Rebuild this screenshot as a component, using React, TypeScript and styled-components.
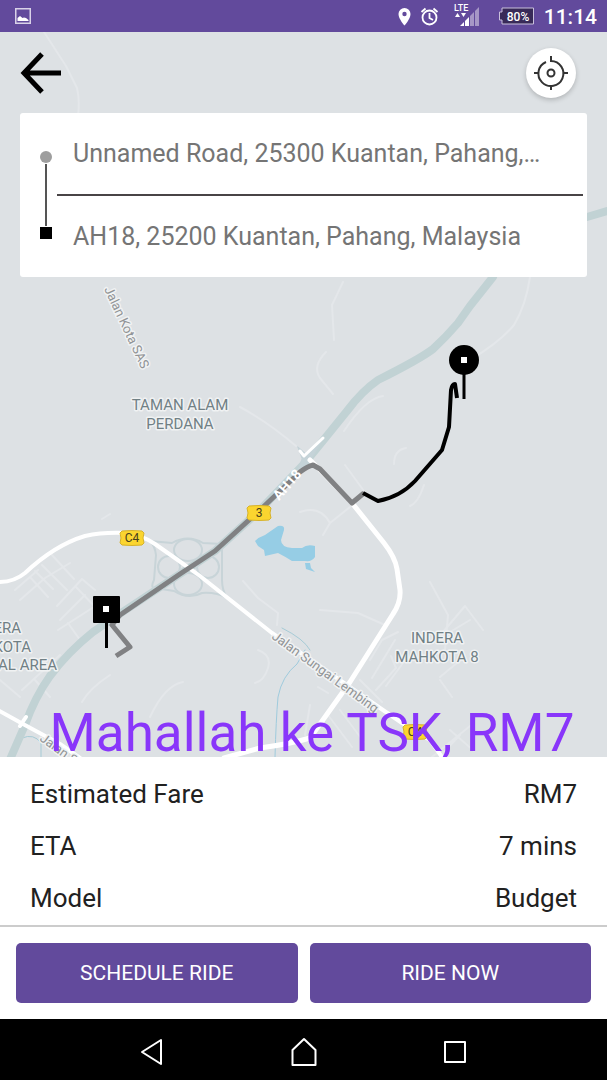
import React from "react";
import styled, { createGlobalStyle } from "styled-components";

const GlobalStyle = createGlobalStyle`
  *, *::before, *::after { box-sizing: border-box; }
  body { margin: 0; background: #000; font-family: Roboto, "Noto Sans", sans-serif; }
  button { font: inherit; border: 0; padding: 0; cursor: pointer; }
  svg { display: block; }
`;

const purple = "#624a9c";

const Screen = styled.div`
  display: flex;
  flex-direction: column;
  min-height: 100vh;
  background: #fff;
`;

const StatusBar = styled.header`
  display: flex;
  align-items: center;
  justify-content: space-between;
  height: 32px;
  padding: 0 10px 0 15px;
  background: ${purple};
  color: #fff;
`;

const StatusGroup = styled.div`
  display: flex;
  align-items: center;
`;

const Clock = styled.time`
  margin-left: 10px;
  padding-top: 2px;
  font-size: 21px;
  font-weight: 500;
  line-height: 30px;
`;

const MapArea = styled.main`
  position: relative;
  flex: 1 0 auto;
  display: flex;
  flex-direction: column;
  min-height: 560px;
  overflow: hidden;
  background: #dde1e4;
`;

const MapCanvas = styled.svg`
  position: absolute;
  inset: 0;
  width: 100%;
  height: 100%;
`;

const TopBar = styled.div`
  position: relative;
  display: flex;
  align-items: center;
  justify-content: space-between;
  height: 81px;
  padding: 0 31px 0 20px;
`;

const BackButton = styled.button`
  background: none;
`;

const LocateButton = styled.button`
  display: grid;
  place-items: center;
  width: 50px;
  height: 50px;
  border-radius: 50%;
  background: #fff;
  box-shadow: 0 2px 5px rgba(0, 0, 0, 0.2);
`;

const RouteCard = styled.section`
  position: relative;
  display: flex;
  gap: 5px;
  margin: 0 20px;
  padding: 0 4px 0 20px;
  border-radius: 3px;
  background: #fff;
`;

const Rail = styled.div`
  display: flex;
  flex-direction: column;
  align-items: center;
  gap: 1px;
  width: 12px;
  padding: 38px 0;
`;

const OriginDot = styled.span`
  width: 12px;
  height: 12px;
  border-radius: 50%;
  background: #9e9e9e;
`;

const RailLine = styled.span`
  flex: 1;
  width: 2px;
  background: #555;
`;

const DestinationDot = styled.span`
  width: 12px;
  height: 12px;
  background: #000;
`;

const Stops = styled.div`
  flex: 1;
  min-width: 0;
`;

const Stop = styled.p`
  margin: 0;
  padding: 0 16px;
  overflow: hidden;
  color: #757575;
  font-size: 25px;
  line-height: 81px;
  text-overflow: ellipsis;
  white-space: nowrap;

  & + & {
    border-top: 2px solid #484446;
  }
`;

const Caption = styled.p`
  position: relative;
  margin: auto 0 0;
  padding-left: 17px;
  color: #8936fa;
  font-size: 53px;
  line-height: 48px;
  text-align: center;
  white-space: nowrap;
`;

const Details = styled.dl`
  margin: 0;
  padding: 11px 30px 1px;
  color: #212121;
  font-size: 26px;
  line-height: 52px;
`;

const DetailRow = styled.div`
  display: flex;
  justify-content: space-between;

  dd { margin: 0; }
`;

const Actions = styled.div`
  display: grid;
  grid-template-columns: 1fr 1fr;
  gap: 12px;
  padding: 16px;
  border-top: 2px solid #ccc;
`;

const ActionButton = styled.button`
  height: 60px;
  border-radius: 5px;
  background: ${purple};
  color: #fff;
  font-size: 21px;
`;

const NavBar = styled.nav`
  display: grid;
  grid-template-columns: repeat(3, 25%);
  justify-content: center;
  height: 61px;
  background: #000;
`;

const NavButton = styled.button`
  display: grid;
  place-items: center;
  padding-top: 4px;
  background: none;
`;

const details = [
  { label: "Estimated Fare", value: "RM7" },
  { label: "ETA", value: "7 mins" },
  { label: "Model", value: "Budget" },
];

function RoadBadge({ x, y, label }: { x: number; y: number; label: string }) {
  return (
    <g transform={`translate(${x} ${y})`}>
      <path d="M-10-7Q0-8 10-7L12-5 11 0 12 5 10 7Q0 8-10 7L-12 5-11 0-12-5Z" fill="#fbd52f" stroke="#d6b22c" />
      <text y="4" fontSize="12" textAnchor="middle" fill="#47401c">{label}</text>
    </g>
  );
}

function RouteMap() {
  return (
    <MapCanvas viewBox="0 32 607 725" preserveAspectRatio="xMidYMax slice" role="img" aria-label="Route map">
      <g fill="none" strokeLinecap="round" strokeLinejoin="round">
        <g stroke="#e4e7ea" strokeWidth="2">
          <path d="M44 32L66 66 77 88Q80 100 78 116" />
          <path d="M530 277Q526 305 514 325Q500 342 470 360" />
          <path d="M343 282L332 305 334 340M326 352Q312 366 320 378L333 394M383 396Q366 398 344 431M345 465L364 491M406 448Q394 450 394 464M424 485Q418 503 410 506" />
          <path d="M240 407Q268 422 296 446" />
          <path d="M350 507L330 523 323 535M300 512Q320 505 330 523M102 519L110 514M243 581L258 598 278 613 277 625M82 702Q90 688 110 675M150 717Q165 685 183 682M258 650Q272 655 268 668T255 683" />
          <path d="M15 590L38 570M35 571L53 589M30 577L48 597M42 565L67 590M52 555L74 579M20 600L45 578 70 563M57 606L82 579 95 590M60 620L85 595M68 623L80 640M58 630L100 603M76 587L98 610M0 680L20 697M22 690L60 655M35 680L50 697" />
          <path d="M430 582L448 615 445 650M443 632L465 606 483 630M470 620L440 638M320 610L358 613 385 625M370 660L382 640 398 632M372 678L395 640M376 690L396 668 391 656M386 686L403 663M440 677L463 658M440 680L452 697M360 680L382 702M310 705L305 735M318 687L328 693M328 715L352 747M340 710L364 742M432 757L470 726M440 756L460 735M450 730L474 751" />
        </g>
        <path d="M275 757Q276 720 278 697Q282 676 297 664L305 650" stroke="#9fcbdd" />
        <path d="M22 738Q34 733 41 743V757M282 628Q304 639 310 650" stroke="#a6cbd6" />
        <path d="M493 277L470 306 458 323Q446 337 433 349Q420 359 378 380Q362 391 347 411L326 437 304 464 259 511 215 551 180 574 115 617 93 632Q68 652 50 676Q35 697 25 725L8 764M587 217L607 211" stroke="#c1d2d4" strokeWidth="8" />
        <g stroke="#c8d4d8" strokeWidth="2">
          <ellipse cx="188" cy="550" rx="14" ry="11" />
          <ellipse cx="188" cy="584" rx="14" ry="11" />
          <ellipse cx="169" cy="567" rx="11" ry="11" />
          <ellipse cx="208" cy="567" rx="11" ry="11" />
          <path d="M150 541L172 543Q188 534 203 543L222 544V580Q222 590 227 598Q216 592 202 593Q188 600 174 591L155 588Q150 588 154 580L156 555Q155 546 150 541Z" />
        </g>
        <path d="M298 447L306 454 324 437 310 461 296 476 302 459Z" fill="#c5d3d8" stroke="#c5d3d8" />
        <g stroke="#fff" strokeWidth="4">
          <path d="M-5 582Q13 583 25 573Q55 545 85 536Q103 532 125 533Q142 535 155 544Q178 560 200 576L272 633 380 708 402 723 430 740 444 760" />
          <path d="M310 460L324 474 352 503 384 543Q395 557 397 569L400 590Q401 602 393 614L350 682 340 696 310 738Q290 744 260 748L224 758" strokeWidth="5" />
          <path d="M-4 709L23 724 60 744 80 758M20 726L26 717" />
          <path d="M300 451L304 456 323 438" strokeWidth="3" />
        </g>
      </g>

      <path d="M255 541Q259 537 265 535L278 526Q285 525 284 530L281 540Q281 547 292 548L302 548Q307 544 315 546V557Q312 562 305 561L292 561Q284 556 278 553L265 556 264 550 258 546ZM305 563L310 563 311 568 315 572 306 569Z" fill="#96cde5" />

      <g fill="none" strokeLinejoin="round">
        <path d="M116 656L130 647 112 625 120 615 180 574 215 551 259 511 300 472Q308 466 313 465L320 469 352 503 364 493" stroke="#808183" strokeWidth="5" />
        <path d="M363 493L378 501Q400 497 415 481L442 450 449 427 451 390Q452 384 455 384L457 398" stroke="#000" strokeWidth="4" />
      </g>

      <g stroke="#f0f2f3" strokeWidth="3" paintOrder="stroke" strokeLinejoin="round">
        <g fill="#708085" fontSize="15" textAnchor="middle">
          <text x="180" y="410">TAMAN ALAM</text>
          <text x="180" y="429">PERDANA</text>
          <text x="437" y="643">INDERA</text>
          <text x="437" y="662">MAHKOTA 8</text>
          <g textAnchor="end">
            <text x="21" y="633">INDERA</text>
            <text x="31" y="652">MAHKOTA</text>
            <text x="57" y="670">INDUSTRIAL AREA</text>
          </g>
        </g>
        <g fill="#919496" fontSize="13">
          <text transform="translate(104 289) rotate(65)">Jalan Kota SAS</text>
          <text transform="translate(271 638) rotate(36)">Jalan Sungai Lembing</text>
          <text transform="translate(39 740) rotate(36)">Jalan Sungai Lembing</text>
        </g>
      </g>
      <text transform="translate(279 501) rotate(-49)" fontSize="14" fontWeight="700" fill="#fff">AH18</text>

      <RoadBadge x={259} y={513} label="3" />
      <RoadBadge x={132} y={538} label="C4" />
      <RoadBadge x={415} y={732} label="C4" />

      <path d="M106.500 620V648M464 372V399" stroke="#000" strokeWidth="3" />
      <rect x="93" y="596" width="27" height="27" rx="1" />
      <rect x="103" y="606" width="6" height="6" fill="#fff" />
      <circle cx="464" cy="360" r="15" />
      <rect x="461" y="357" width="6" height="6" fill="#fff" />
    </MapCanvas>
  );
}

function StatusIcons() {
  return (
    <svg width="138" height="32" viewBox="396 0 138 32" aria-hidden="true">
      <path d="M404.500 8a6 6 0 0 0-6 6c0 5 6 11.500 6 11.500s6-6.500 6-11.500a6 6 0 0 0-6-6Zm0 3.800a2.200 2.200 0 1 1 0 4.400 2.200 2.200 0 0 1 0-4.400Z" fill="#fff" />
      <g fill="none" stroke="#fff" strokeWidth="1.800">
        <circle cx="429.500" cy="17.500" r="7" />
        <path d="M429.500 13v5l3.500 2M421.500 12l4-3.500M437.500 12l-4-3.500" />
      </g>
      <text x="454" y="11" fill="#fff" fontSize="9" fontWeight="500">LTE</text>
      <path d="M455 17l2.500-4 2.500 4ZM461 13h5l-2.500 4Z" fill="#fff" />
      <path d="M460 26l4-4v4ZM465 21l4-4v9h-4Z" fill="#fff" />
      <path d="M470 16l4-4v14h-4ZM475 11l4-4v19h-4Z" fill="#a697c6" />
      <path d="M502 8h31.500v16H502v-4h-2.500v-8h2.500Z" fill="#382a58" stroke="#c9c0dc" />
      <text x="518" y="21" textAnchor="middle" fill="#fff" fontSize="12" fontWeight="500">80%</text>
    </svg>
  );
}

export default function App() {
  return (
    <Screen>
      <GlobalStyle />
      <StatusBar>
        <svg width="16" height="16" viewBox="0 0 16 16" aria-hidden="true">
          <rect x=".75" y=".75" width="14.500" height="14.500" fill="none" stroke="#d9d2e8" strokeWidth="1.500" />
          <path d="M2.500 13V10L5 8l2.500 2L9 9.500 11 10l2.500 2v1Z" fill="#fff" />
        </svg>
        <StatusGroup>
          <StatusIcons />
          <Clock>11:14</Clock>
        </StatusGroup>
      </StatusBar>

      <MapArea>
        <RouteMap />
        <TopBar>
          <BackButton aria-label="Back">
            <svg width="42" height="42" viewBox="0 0 42 42" fill="none" stroke="#000" strokeWidth="5">
              <path d="M22 2L4 21 22 40M4 21H41" />
            </svg>
          </BackButton>
          <LocateButton aria-label="My location">
            <svg width="34" height="34" viewBox="0 0 34 34" fill="none" stroke="#333" strokeWidth="2">
              <path d="M17 0V5A12.500 12.500 0 1 1 12 6M0 17H5M29 17H34M17 29V34" />
              <circle cx="17" cy="17" r="3.500" />
            </svg>
          </LocateButton>
        </TopBar>
        <RouteCard aria-label="Route">
          <Rail aria-hidden="true">
            <OriginDot />
            <RailLine />
            <DestinationDot />
          </Rail>
          <Stops>
            <Stop>Unnamed Road, 25300 Kuantan, Pahang,…</Stop>
            <Stop>AH18, 25200 Kuantan, Pahang, Malaysia</Stop>
          </Stops>
        </RouteCard>
        <Caption>Mahallah ke TSK, RM7</Caption>
      </MapArea>

      <Details>
        {details.map(({ label, value }) => (
          <DetailRow key={label}>
            <dt>{label}</dt>
            <dd>{value}</dd>
          </DetailRow>
        ))}
      </Details>
      <Actions>
        <ActionButton>SCHEDULE RIDE</ActionButton>
        <ActionButton>RIDE NOW</ActionButton>
      </Actions>

      <NavBar aria-label="System">
        <NavButton aria-label="Back">
          <svg width="24" height="28" viewBox="0 0 24 28" fill="none" stroke="#fff" strokeWidth="2" strokeLinejoin="round">
            <path d="M21 2V26L2 14Z" />
          </svg>
        </NavButton>
        <NavButton aria-label="Home">
          <svg width="26" height="30" viewBox="0 0 26 30" fill="none" stroke="#fff" strokeWidth="2" strokeLinejoin="round">
            <path d="M13 2L24.500 13V28H1.500V13Z" />
          </svg>
        </NavButton>
        <NavButton aria-label="Recent apps">
          <svg width="22" height="22" viewBox="0 0 22 22" fill="none" stroke="#fff" strokeWidth="2" strokeLinejoin="round">
            <rect x="1" y="1" width="20" height="20" />
          </svg>
        </NavButton>
      </NavBar>
    </Screen>
  );
}
